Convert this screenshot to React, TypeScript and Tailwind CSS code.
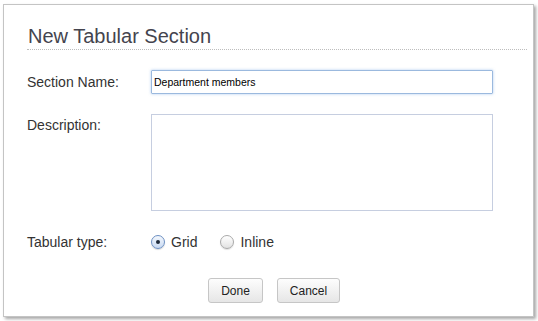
import React, { useState } from "react";

const Radio: React.FC<{ checked: boolean; label: string; onSelect: () => void }> = ({ checked, label, onSelect }) => (
  <label className="flex items-center cursor-pointer" onClick={onSelect}>
    <span
      className={
        checked
          ? "w-[14px] h-[14px] rounded-full border border-[#6c8fc2] bg-gradient-to-b from-[#f4f8fd] to-[#c9daf2] flex items-center justify-center shadow-[0_1px_1px_rgba(0,0,0,0.15)]"
          : "w-[14px] h-[14px] rounded-full border border-[#a9a9a9] bg-gradient-to-b from-[#ffffff] to-[#e2e2e2] shadow-[0_1px_1px_rgba(0,0,0,0.12)]"
      }
    >
      {checked && <span className="w-[4px] h-[4px] rounded-full bg-[#1f2a3a]" />}
    </span>
    <span className="ml-[6px] text-[14px] leading-[16px] text-[#333]">{label}</span>
  </label>
);

export default function App() {
  const [type, setType] = useState<"grid" | "inline">("grid");
  const [name, setName] = useState("Department members");

  return (
    <div className="w-[538px] h-[321px] bg-white pl-[3px] pt-[4px] font-['Liberation_Sans',Arial,sans-serif]">
      <div className="w-[531px] h-[313px] bg-white border border-[#c4c4c4] shadow-[2px_2px_3px_rgba(0,0,0,0.35)]">
        {/* Header */}
        <div className="ml-[23px] mr-[6px] pt-[19px] pb-[1px] border-b border-dotted border-[#bdbdbd]">
          <h2 className="pl-[1px] text-[20px] leading-[24px] text-[#44444e]">New Tabular Section</h2>
        </div>

        {/* Form */}
        <div className="pl-[23px]">
          <div className="mt-[20px] flex items-center">
            <div className="w-[124px] text-[14px] leading-[16px] text-[#333]">Section Name:</div>
            <input
              value={name}
              onChange={(e) => setName(e.target.value)}
              className="w-[342px] h-[24px] px-[2px] text-[10.5px] text-black border border-[#9bb9de] rounded-[1px] outline-none shadow-[0_0_3px_rgba(110,160,225,0.55)]"
            />
          </div>

          <div className="mt-[20px] flex items-start">
            <div className="w-[124px] pt-[3px] text-[14px] leading-[16px] text-[#333]">Description:</div>
            <textarea className="block w-[342px] h-[97px] border border-[#c6cee0] outline-none resize-none text-[11px] p-[2px]" />
          </div>

          <div className="mt-[21px] h-[20px] flex items-center">
            <div className="w-[124px] text-[14px] leading-[16px] text-[#333]">Tabular type:</div>
            <div className="flex items-center gap-[23px]">
              <Radio checked={type === "grid"} label="Grid" onSelect={() => setType("grid")} />
              <Radio checked={type === "inline"} label="Inline" onSelect={() => setType("inline")} />
            </div>
          </div>

          <div className="mt-[26px] pl-[181px] flex gap-[14px]">
            <button className="w-[55px] h-[25px] text-[12px] text-[#222] border border-[#c6c6c6] rounded-[3px] bg-gradient-to-b from-[#fdfdfd] to-[#e6e6e6]">
              Done
            </button>
            <button className="w-[63px] h-[25px] text-[12px] text-[#222] border border-[#c6c6c6] rounded-[3px] bg-gradient-to-b from-[#fdfdfd] to-[#e6e6e6]">
              Cancel
            </button>
          </div>
        </div>
      </div>
    </div>
  );
}
